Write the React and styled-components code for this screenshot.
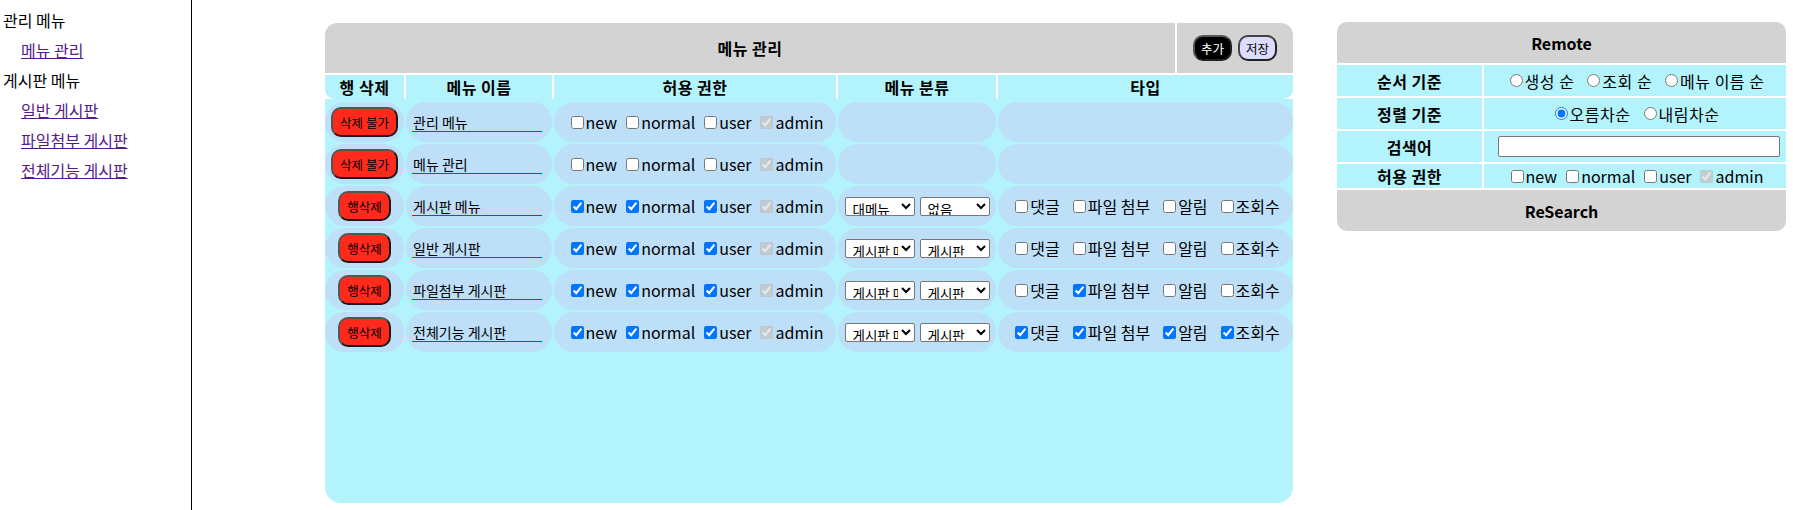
import styled, { createGlobalStyle } from "styled-components";

const GlobalStyle = createGlobalStyle`
  html, body {
    margin: 0;
    padding: 0;
    background: #fff;
    font-family: "Noto Sans CJK KR", "Noto Sans", sans-serif;
    color: #000;
  }
  input, select, button {
    font-family: "Noto Sans CJK KR", "Noto Sans", sans-serif;
  }
`;

const Page = styled.div`
  display: flex;
  height: 510px;
  overflow: hidden;
`;

const Sidebar = styled.nav`
  width: 192px;
  flex-shrink: 0;
  border-right: 1px solid #000;
  padding: 5px 0 0 3px;
  box-sizing: border-box;
  font-size: 16px;
  line-height: 30px;
`;

const MenuGroup = styled.div`
  white-space: nowrap;
`;

const MenuLink = styled.a`
  display: block;
  padding-left: 18px;
  color: #551a8b;
  text-decoration: underline;
  white-space: nowrap;
`;

const Content = styled.main`
  display: flex;
  align-items: flex-start;
  gap: 44px;
  padding: 22px 0 0 133px;
`;

/* ---------- main panel ---------- */

const Panel = styled.section`
  width: 968px;
  height: 480px;
  margin-top: 1px;
  display: flex;
  flex-direction: column;
  gap: 2px;
`;

const TitleRow = styled.div`
  display: grid;
  grid-template-columns: 850px 116px;
  gap: 2px;
  height: 50px;
`;

const TitleCell = styled.div`
  background: #d3d3d3;
  border-top-left-radius: 12px;
  display: flex;
  align-items: center;
  justify-content: center;
  font-size: 16px;
  font-weight: 700;
  letter-spacing: 0.5px;
`;

const ToolCell = styled.div`
  background: #d3d3d3;
  border-top-right-radius: 12px;
  display: flex;
  align-items: center;
  justify-content: center;
  gap: 6px;
`;

const ToolButton = styled.button`
  height: 26px;
  padding: 0 6px;
  border-radius: 10px;
  border: 2px solid ${(p) => (p.$dark ? "#555" : "#444")};
  border-bottom-color: #222;
  border-right-color: #222;
  background: ${(p) => (p.$dark ? "#000" : "#dcdcff")};
  color: ${(p) => (p.$dark ? "#fff" : "#000")};
  font-size: 12.5px;
  cursor: pointer;
`;

const COLS = "79px 146px 282px 158px 295px";

const HeadRow = styled.div`
  display: grid;
  grid-template-columns: ${COLS};
  gap: 2px;
  height: 24px;
  margin-top: -2px;
  border-top: 2px solid #fff;
`;

const HeadCell = styled.div`
  background: #b3f3fc;
  display: flex;
  align-items: center;
  justify-content: center;
  font-size: 16px;
  font-weight: 700;
  letter-spacing: 0.5px;
  &:first-child {
    border-bottom-left-radius: 10px;
  }
  &:last-child {
    border-bottom-right-radius: 10px;
  }
`;

const Body = styled.div`
  flex: 1;
  margin-top: -2px;
  background: #b3f3fc;
  border-radius: 0 0 16px 16px;
  padding-top: 3px;
  display: grid;
  grid-template-columns: ${COLS};
  grid-auto-rows: 40px;
  align-content: start;
  gap: 2px;
`;

const Cell = styled.div`
  background: #bddff8;
  border-radius: 20px;
  display: flex;
  align-items: center;
  justify-content: center;
  white-space: nowrap;
  font-size: 16px;
`;

const DeleteButton = styled.button`
  height: 30px;
  padding: 0 7px;
  border-radius: 10px;
  border: 2px solid #555;
  border-bottom-color: #1a1a1a;
  border-right-color: #1a1a1a;
  background: #ff2a1c;
  color: #000;
  font-size: 12.5px;
  cursor: pointer;
`;

const NameInput = styled.input`
  width: 130px;
  height: 20px;
  box-sizing: border-box;
  border: none;
  border-bottom: 1px solid #ff0000;
  background: transparent;
  padding: 0 1px;
  font-size: 14px;
  outline: none;
  margin-right: 4px;
`;

const Label = styled.label`
  display: inline-flex;
  align-items: center;
  font-size: 16px;
  margin-left: ${(p) => p.$gap}px;
  &:first-child {
    margin-left: 0;
  }
  input {
    margin: 3px 2px 3px 4px;
  }
`;

const Select = styled.select`
  width: 70px;
  height: 19px;
  font-size: 13.5px;
  padding: 0 0 0 3px;
  border: 1px solid #767676;
  border-radius: 2px;
  background: #fff;
  color: #000;
  & + & {
    margin-left: 5px;
  }
`;

/* ---------- remote panel ---------- */

const Remote = styled.aside`
  width: 449px;
  display: grid;
  grid-template-columns: 145px 302px;
  grid-template-rows: 41px 31px 31px 31px 24px 41px;
  gap: 2px;
  border-radius: 10px;
  overflow: hidden;
`;

const RemoteBar = styled.div`
  grid-column: 1 / -1;
  background: #d3d3d3;
  display: flex;
  align-items: center;
  justify-content: center;
  font-size: 16px;
  font-weight: 700;
  cursor: ${(p) => (p.$action ? "pointer" : "default")};
`;

const RemoteLabel = styled.div`
  background: #b3f3fc;
  display: flex;
  align-items: center;
  justify-content: center;
  font-size: 16px;
  font-weight: 700;
  letter-spacing: 0.5px;
`;

const RemoteValue = styled.div`
  background: #b3f3fc;
  display: flex;
  align-items: center;
  justify-content: center;
  white-space: nowrap;
  font-size: 16px;
  letter-spacing: ${(p) => (p.$korean ? "0.5px" : "0")};
`;

const SearchInput = styled.input`
  width: 282px;
  height: 21px;
  box-sizing: border-box;
  border: 1px solid #767676;
  border-radius: 2px;
  background: #fff;
  margin-left: 8px;
`;

const PERMS = ["new", "normal", "user"];
const TYPES = ["댓글", "파일 첨부", "알림", "조회수"];

const rows = [
  { name: "관리 메뉴", locked: true },
  { name: "메뉴 관리", locked: true },
  { name: "게시판 메뉴", perms: true, cat: ["대메뉴", "없음"], types: [] },
  { name: "일반 게시판", perms: true, cat: ["게시판 메뉴", "게시판"], types: [] },
  { name: "파일첨부 게시판", perms: true, cat: ["게시판 메뉴", "게시판"], types: ["파일 첨부"] },
  { name: "전체기능 게시판", perms: true, cat: ["게시판 메뉴", "게시판"], types: TYPES },
];

function PermChecks({ checked }) {
  return (
    <>
      {PERMS.map((p) => (
        <Label key={p} $gap={5}>
          <input type="checkbox" defaultChecked={checked} />
          {p}
        </Label>
      ))}
      <Label $gap={5}>
        <input type="checkbox" defaultChecked disabled />
        admin
      </Label>
    </>
  );
}

function MenuRow({ row }) {
  return (
    <>
      <Cell>
        <DeleteButton>{row.locked ? "삭제 불가" : "행삭제"}</DeleteButton>
      </Cell>
      <Cell>
        <NameInput defaultValue={row.name} />
      </Cell>
      <Cell>
        <PermChecks checked={!!row.perms} />
      </Cell>
      <Cell>
        {row.cat &&
          row.cat.map((c, i) => (
            <Select key={i} defaultValue={c}>
              <option>{c}</option>
            </Select>
          ))}
      </Cell>
      <Cell>
        {row.types &&
          TYPES.map((t) => (
            <Label key={t} $gap={9}>
              <input type="checkbox" defaultChecked={row.types.includes(t)} />
              {t}
            </Label>
          ))}
      </Cell>
    </>
  );
}

export default function App() {
  return (
    <>
      <GlobalStyle />
      <Page>
        <Sidebar>
          <MenuGroup>관리 메뉴</MenuGroup>
          <MenuLink href="#">메뉴 관리</MenuLink>
          <MenuGroup>게시판 메뉴</MenuGroup>
          <MenuLink href="#">일반 게시판</MenuLink>
          <MenuLink href="#">파일첨부 게시판</MenuLink>
          <MenuLink href="#">전체기능 게시판</MenuLink>
        </Sidebar>
        <Content>
          <Panel>
            <TitleRow>
              <TitleCell>메뉴 관리</TitleCell>
              <ToolCell>
                <ToolButton $dark>추가</ToolButton>
                <ToolButton>저장</ToolButton>
              </ToolCell>
            </TitleRow>
            <HeadRow>
              <HeadCell>행 삭제</HeadCell>
              <HeadCell>메뉴 이름</HeadCell>
              <HeadCell>허용 권한</HeadCell>
              <HeadCell>메뉴 분류</HeadCell>
              <HeadCell>타입</HeadCell>
            </HeadRow>
            <Body>
              {rows.map((r) => (
                <MenuRow key={r.name} row={r} />
              ))}
            </Body>
          </Panel>
          <Remote>
            <RemoteBar>Remote</RemoteBar>
            <RemoteLabel>순서 기준</RemoteLabel>
            <RemoteValue $korean>
              <Label $gap={9}>
                <input type="radio" name="order" />
                생성 순
              </Label>
              <Label $gap={9}>
                <input type="radio" name="order" />
                조회 순
              </Label>
              <Label $gap={9}>
                <input type="radio" name="order" />
                메뉴 이름 순
              </Label>
            </RemoteValue>
            <RemoteLabel>정렬 기준</RemoteLabel>
            <RemoteValue $korean>
              <Label $gap={9}>
                <input type="radio" name="sort" defaultChecked />
                오름차순
              </Label>
              <Label $gap={9}>
                <input type="radio" name="sort" />
                내림차순
              </Label>
            </RemoteValue>
            <RemoteLabel>검색어</RemoteLabel>
            <RemoteValue>
              <SearchInput />
            </RemoteValue>
            <RemoteLabel>허용 권한</RemoteLabel>
            <RemoteValue>
              <PermChecks checked={false} />
            </RemoteValue>
            <RemoteBar $action>ReSearch</RemoteBar>
          </Remote>
        </Content>
      </Page>
    </>
  );
}
